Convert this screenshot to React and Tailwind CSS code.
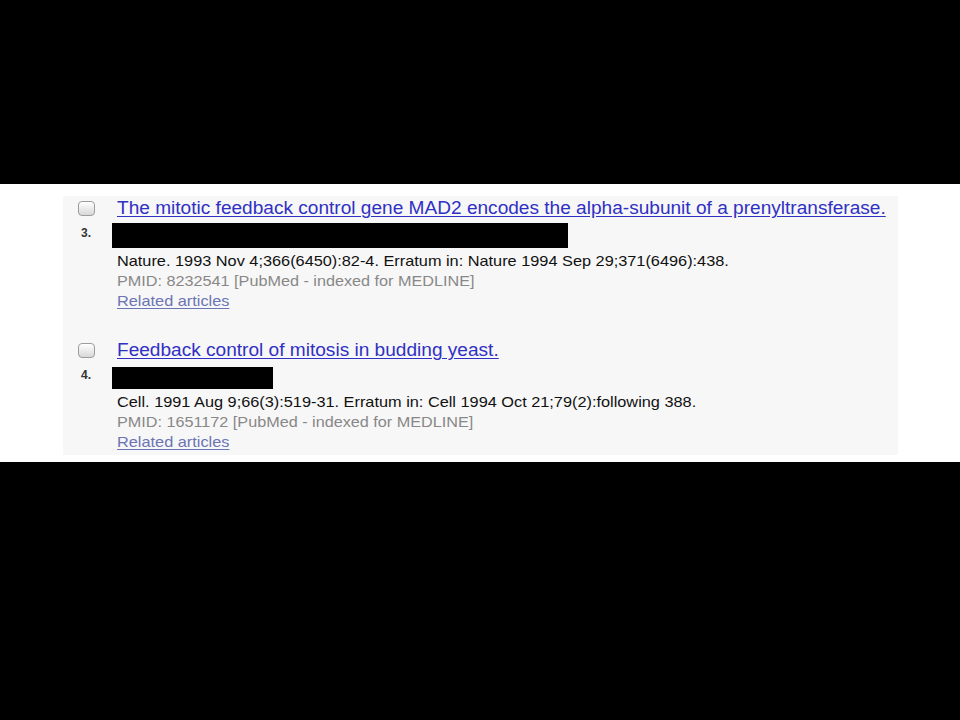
import React from 'react';

const results = [
  {
    num: '3.',
    title: 'The mitotic feedback control gene MAD2 encodes the alpha-subunit of a prenyltransferase.',
    authorsBox: 'mt-[5px] w-[456px] h-[25px]',
    citation: 'Nature. 1993 Nov 4;366(6450):82-4. Erratum in: Nature 1994 Sep 29;371(6496):438.',
    pmid: 'PMID: 8232541 [PubMed - indexed for MEDLINE]',
  },
  {
    num: '4.',
    title: 'Feedback control of mitosis in budding yeast.',
    authorsBox: 'mt-[7px] w-[161px] h-[22px]',
    citation: 'Cell. 1991 Aug 9;66(3):519-31. Erratum in: Cell 1994 Oct 21;79(2):following 388.',
    pmid: 'PMID: 1651172 [PubMed - indexed for MEDLINE]',
  },
];

const Checkbox = () => (
  <div className="mt-[3px] w-[17px] h-[15px] rounded-[4px] border border-[#9c9c9c] bg-linear-to-b from-white to-[#d8d8d8] shadow-[inset_0_1px_0_#fff]" />
);

// the source capture is a little stretched sideways, so the text lines are too
const ResultItem = ({ item, first }) => (
  <div className={`flex ${first ? '' : 'mt-[29px]'}`}>
    <div className="w-[39px] flex flex-col">
      <Checkbox />
      <span className="mt-[10px] pl-[3px] text-[12px] leading-[14px] font-bold text-[#333]">
        {item.num}
      </span>
    </div>
    <div className="flex-1 flex flex-col items-start">
      <a href="#" className="inline-block origin-left scale-x-[1.09] whitespace-nowrap text-[17.5px] leading-[20px] text-[#3030c4] underline underline-offset-[2px]">
        {item.title}
      </a>
      <div className={`-ml-[5px] bg-black ${item.authorsBox}`} />
      <div className="mt-[3px] inline-block origin-left scale-x-[1.087] whitespace-nowrap text-[15px] leading-[20px] text-[#111]">
        {item.citation}
      </div>
      <div className="inline-block origin-left scale-x-[1.08] whitespace-nowrap text-[15px] leading-[20px] text-[#888]">
        {item.pmid}
      </div>
      <a href="#" className="inline-block origin-left scale-x-[1.087] text-[15px] leading-[20px] text-[#6b74b5] underline underline-offset-[2px]">
        Related articles
      </a>
    </div>
  </div>
);

export default function App() {
  return (
    <div className="w-[960px] h-[720px] bg-black pt-[184px] font-['Liberation_Sans',Arial,sans-serif]">
      <div className="h-[278px] bg-white pt-[12px] pl-[63px] pr-[62px]">
        <div className="h-[259px] bg-[#f7f7f7] pt-[2px] pl-[15px]">
          {results.map((item, i) => (
            <ResultItem key={item.num} item={item} first={i === 0} />
          ))}
        </div>
      </div>
    </div>
  );
}
